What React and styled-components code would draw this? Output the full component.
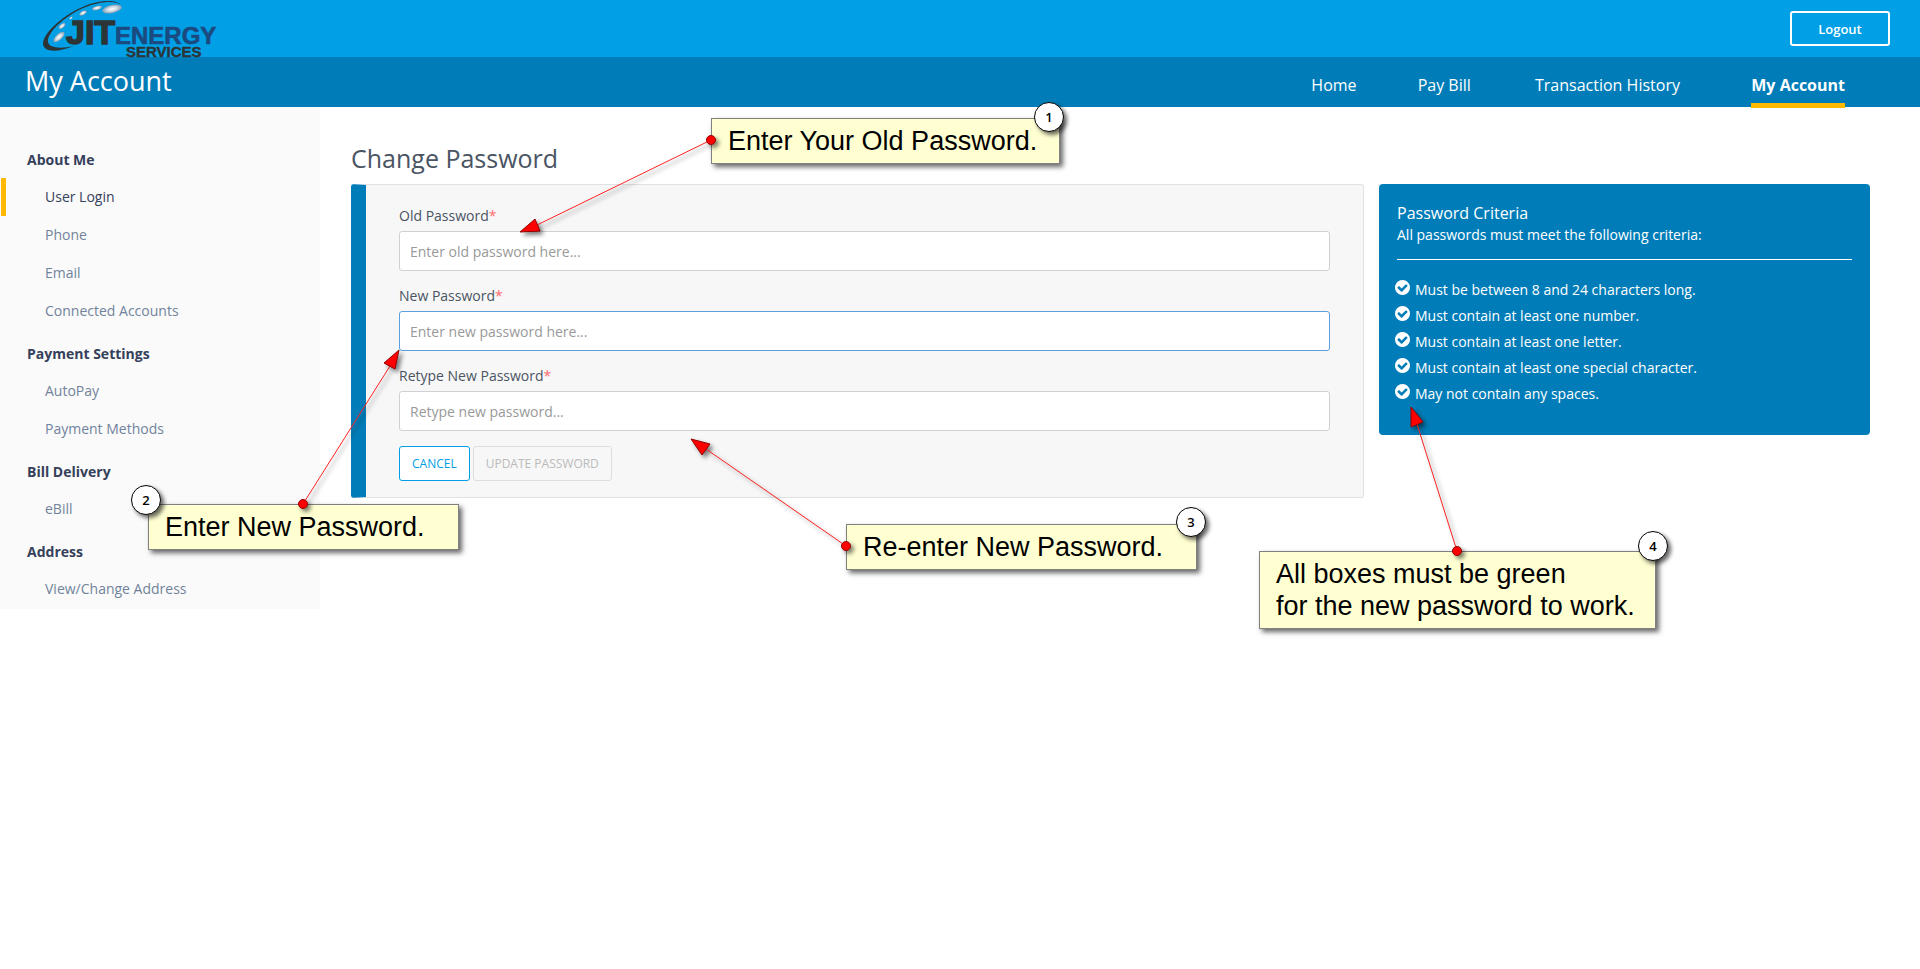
import React, { useState } from "react";
import styled, { createGlobalStyle, css } from "styled-components";

const navLinks = ["Home", "Pay Bill", "Transaction History", "My Account"];

const menu = [
  { title: "About Me", items: ["User Login", "Phone", "Email", "Connected Accounts"] },
  { title: "Payment Settings", items: ["AutoPay", "Payment Methods"] },
  { title: "Bill Delivery", items: ["eBill"] },
  { title: "Address", items: ["View/Change Address"] },
];

const fields = [
  { id: "oldPassword", label: "Old Password", placeholder: "Enter old password here..." },
  { id: "newPassword", label: "New Password", placeholder: "Enter new password here...", active: true },
  { id: "retypePassword", label: "Retype New Password", placeholder: "Retype new password..." },
];

const criteria = [
  "Must be between 8 and 24 characters long.",
  "Must contain at least one number.",
  "Must contain at least one letter.",
  "Must contain at least one special character.",
  "May not contain any spaces.",
];

// badge: centre of the numbered circle
const notes = [
  { n: 1, x: 711, y: 118, w: 349, badge: [1049, 117], lines: ["Enter Your Old Password."] },
  { n: 2, x: 148, y: 504, w: 311, badge: [146, 500], lines: ["Enter New Password."] },
  { n: 3, x: 846, y: 524, w: 351, badge: [1191, 522], lines: ["Re-enter New Password."] },
  {
    n: 4,
    x: 1259,
    y: 551,
    w: 397,
    badge: [1653, 546],
    lines: ["All boxes must be green", "for the new password to work."],
  },
];

const arrows = [
  { from: [711, 140], to: [537, 225], head: "520,232 535,219 540,231" },
  { from: [303, 504], to: [390, 366], head: "399,350 384,363 395,369" },
  { from: [846, 546], to: [706, 449], head: "691,439 710,444 702,455" },
  { from: [1457, 551], to: [1417, 424], head: "1411,407 1423,422 1411,427" },
];

const Logo = () => (
  <LogoSvg viewBox="0 0 180 57" role="img" aria-label="JIT Energy Services">
    <defs>
      <radialGradient id="dot">
        <stop offset="0" stopColor="#fff" />
        <stop offset="0.5" stopColor="#d3dde5" />
        <stop offset="1" stopColor="#7f9db3" />
      </radialGradient>
    </defs>
    <path
      d="M78 5C74 -1 54 -1 35 9C14 20 0 35 0 44C1 52 13 53 31 46C17 49 6 48 5 42C4 34 17 20 36 10C54 1 73 0 78 5Z"
      fill="#2d3436"
    />
    <g fill="url(#dot)">
      <ellipse cx="69" cy="9" rx="10" ry="4" transform="rotate(-12 69 9)" />
      <ellipse cx="54" cy="8" rx="5" ry="2" transform="rotate(-14 54 8)" />
      <ellipse cx="40" cy="13" rx="4" ry="2" transform="rotate(-28 40 13)" />
      <ellipse cx="28" cy="18" rx="2" ry="1" transform="rotate(-35 28 18)" />
      <ellipse cx="19" cy="26" rx="4" ry="2" transform="rotate(-40 19 26)" />
      <ellipse cx="16" cy="37" rx="7" ry="3" transform="rotate(-42 16 37)" />
    </g>
    <LogoText x="23" y="44" $size={34} $color="#2d3436" strokeWidth="1.5">JIT</LogoText>
    <LogoText x="72" y="44" $size={24} $color="#1b4a80" strokeWidth="0.6">ENERGY</LogoText>
    <LogoText x="83" y="57" $size={15} $color="#2d3436" strokeWidth="0.4">SERVICES</LogoText>
  </LogoSvg>
);

const CheckIcon = () => (
  <CheckSvg viewBox="128 128 1536 1536" aria-hidden="true">
    <path d="M1412 734q0-28-18-46l-91-90q-19-19-45-19t-45 19l-408 407-226-226q-19-19-45-19t-45 19l-91 90q-18 18-18 46 0 27 18 45l362 362q19 19 45 19 27 0 46-19l543-543q18-18 18-45zm252 162q0 209-103 385.5t-279.5 279.5-385.5 103-385.5-103-279.5-279.5-103-385.5 103-385.5 279.5-279.5 385.5-103 385.5 103 279.5 279.5 103 385.5z" />
  </CheckSvg>
);

export default function App() {
  const [values, setValues] = useState({});

  const handleChange = (e) => {
    setValues({ ...values, [e.target.id]: e.target.value });
  };

  const complete = fields.every((f) => values[f.id]);

  return (
    <Page>
      <GlobalStyle />
      <TopBar>
        <Logo />
        <LogoutButton type="button">Logout</LogoutButton>
      </TopBar>
      <NavBar>
        <NavTitle>My Account</NavTitle>
        <Nav>
          {navLinks.map((label) => (
            <NavLink key={label} href="#" data-label={label} $active={label === "My Account"}>
              {label}
            </NavLink>
          ))}
        </Nav>
      </NavBar>

      <Body>
        <Sidebar>
          {menu.map((group) => (
            <section key={group.title}>
              <MenuTitle>{group.title}</MenuTitle>
              {group.items.map((item) => (
                <MenuLink key={item} href="#" $active={item === "User Login"}>
                  {item}
                </MenuLink>
              ))}
            </section>
          ))}
        </Sidebar>

        <Main>
          <Title>Change Password</Title>
          <Columns>
            <Form onSubmit={(e) => e.preventDefault()}>
              {fields.map((f) => (
                <Field key={f.id}>
                  <Label htmlFor={f.id}>
                    {f.label}
                    <Required>*</Required>
                  </Label>
                  <Input
                    id={f.id}
                    type="password"
                    placeholder={f.placeholder}
                    value={values[f.id] || ""}
                    onChange={handleChange}
                    $active={f.active}
                  />
                </Field>
              ))}
              <Actions>
                <Button type="button" onClick={() => setValues({})}>CANCEL</Button>
                <Button type="submit" disabled={!complete}>UPDATE PASSWORD</Button>
              </Actions>
            </Form>

            <Criteria>
              <CriteriaTitle>Password Criteria</CriteriaTitle>
              <CriteriaText>All passwords must meet the following criteria:</CriteriaText>
              <CriteriaList>
                {criteria.map((text) => (
                  <CriteriaItem key={text}>
                    <CheckIcon />
                    {text}
                  </CriteriaItem>
                ))}
              </CriteriaList>
            </Criteria>
          </Columns>
        </Main>
      </Body>

      <Overlay>
        {notes.map((note) => (
          <React.Fragment key={note.n}>
            <Note $x={note.x} $y={note.y} $w={note.w}>
              {note.lines.map((line) => (
                <div key={line}>{line}</div>
              ))}
            </Note>
            <Badge $x={note.badge[0]} $y={note.badge[1]}>{note.n}</Badge>
          </React.Fragment>
        ))}
        <Arrows aria-hidden="true">
          {arrows.map((a) => (
            <g key={a.head}>
              <line x1={a.from[0]} y1={a.from[1]} x2={a.to[0]} y2={a.to[1]} />
              <polygon points={a.head} />
              <circle cx={a.from[0]} cy={a.from[1]} r="4.5" />
            </g>
          ))}
        </Arrows>
      </Overlay>
    </Page>
  );
}

const GlobalStyle = createGlobalStyle`
  *, *::before, *::after {
    box-sizing: border-box;
  }
  body {
    margin: 0;
    background: #fff;
    color: #4a5463;
    font-family: "Open Sans", "Noto Sans", sans-serif;
    font-size: 14px;
    line-height: 20px;
  }
  button, input {
    font-family: inherit;
  }
`;

const Page = styled.div`
  position: relative;
  min-height: 100vh;
`;

const TopBar = styled.header`
  display: flex;
  align-items: center;
  justify-content: space-between;
  height: 57px;
  padding: 0 30px 0 43px;
  background: #009fe6;
`;

const LogoSvg = styled.svg`
  width: 180px;
  height: 57px;
  overflow: visible;
`;

const LogoText = styled.text`
  fill: ${(p) => p.$color};
  stroke: ${(p) => p.$color};
  font-family: "Liberation Sans", Arial, sans-serif;
  font-size: ${(p) => p.$size}px;
  font-weight: 700;
`;

const LogoutButton = styled.button`
  width: 100px;
  height: 35px;
  border: 2px solid #fff;
  border-radius: 3px;
  background: transparent;
  color: #fff;
  font-size: 13px;
  font-weight: 600;
  cursor: pointer;
`;

const NavBar = styled.div`
  display: flex;
  justify-content: space-between;
  height: 50px;
  padding: 0 75px 0 25px;
  background: #007db8;
  color: #fff;
`;

const NavTitle = styled.h1`
  margin: 0;
  font-size: 27px;
  font-weight: 400;
  line-height: 48px;
`;

const Nav = styled.nav`
  display: flex;
  gap: 59px;
`;

const NavLink = styled.a`
  height: 51px;
  color: #fff;
  font-size: 16px;
  line-height: 56px;
  text-decoration: none;
  ${(p) =>
    p.$active &&
    css`
      border-bottom: 5px solid #ffb900;
      font-weight: 700;
    `}

  /* keeps the width of the bold state */
  &::after {
    content: attr(data-label);
    display: block;
    height: 0;
    overflow: hidden;
    visibility: hidden;
    font-weight: 700;
  }
`;

const Body = styled.div`
  display: flex;
  align-items: flex-start;
`;

const Sidebar = styled.aside`
  flex: 0 0 320px;
  padding: 29px 0 1px;
  background: #fafafa;
`;

const MenuTitle = styled.h2`
  margin: 0;
  padding: 14px 27px 8px;
  color: #35405a;
  font-size: 14px;
  font-weight: 700;
  line-height: 20px;
`;

const MenuLink = styled.a`
  display: block;
  margin-left: 1px;
  padding-left: 39px;
  border-left: 5px solid ${(p) => (p.$active ? "#ffb900" : "transparent")};
  color: ${(p) => (p.$active ? "#35405a" : "#71839b")};
  font-weight: ${(p) => (p.$active ? 500 : 400)};
  line-height: 38px;
  text-decoration: none;
`;

const Main = styled.main`
  flex: 1;
  padding: 34px 50px 0 31px;
`;

const Title = styled.h2`
  margin: 0 0 9px;
  color: #4a5463;
  font-size: 25px;
  font-weight: 400;
  line-height: 34px;
`;

const Columns = styled.div`
  display: grid;
  grid-template-columns: 1013fr 491fr;
  align-items: start;
  gap: 15px;
`;

const Form = styled.form`
  padding: 21px 33px 16px;
  border: 1px solid #dfe2e5;
  border-left: 15px solid #007db8;
  border-radius: 3px;
  background: #f7f7f7;
`;

const Field = styled.div`
  margin-bottom: 15px;
`;

const Label = styled.label`
  display: block;
  margin-bottom: 5px;
`;

const Required = styled.span`
  color: #ff6b6b;
`;

const Input = styled.input`
  display: block;
  width: 100%;
  height: 40px;
  padding: 0 10px;
  border: 1px solid ${(p) => (p.$active ? "#5b9fdc" : "#ced0d3")};
  border-radius: 3px;
  background: #fff;
  color: #4a5463;
  font-size: 14px;

  &::placeholder {
    color: #999;
  }
`;

const Actions = styled.div`
  display: flex;
  gap: 3px;
`;

const Button = styled.button`
  height: 35px;
  padding: 0 12px;
  border: 1px solid #009fe6;
  border-radius: 3px;
  background: #fff;
  color: #009fe6;
  font-size: 12px;
  cursor: pointer;

  &:disabled {
    border-color: #dedede;
    background: #f7f7f7;
    color: #bbb;
    cursor: default;
  }
`;

const Criteria = styled.section`
  padding: 18px 18px 28px;
  border-radius: 4px;
  background: #007db8;
  color: #fff;
`;

const CriteriaTitle = styled.h3`
  margin: 0;
  font-size: 16px;
  font-weight: 400;
  line-height: 23px;
`;

const CriteriaText = styled.p`
  margin: 0;
  padding-bottom: 14px;
  border-bottom: 1px solid #fff;
`;

const CriteriaList = styled.ul`
  margin: 17px 0 0;
  padding: 0;
  list-style: none;
`;

const CriteriaItem = styled.li`
  display: flex;
  align-items: flex-start;
  gap: 5px;
  margin-left: -2px;
  line-height: 26px;
`;

const CheckSvg = styled.svg`
  width: 15px;
  height: 15px;
  margin-top: 3px;
  fill: #fff;
`;

const Overlay = styled.div`
  position: absolute;
  inset: 0;
  overflow: hidden;
  pointer-events: none;
`;

const Note = styled.div`
  position: absolute;
  left: ${(p) => p.$x}px;
  top: ${(p) => p.$y}px;
  width: ${(p) => p.$w}px;
  padding: 6px 16px;
  border: 1px solid #808080;
  background: #ffffd2;
  box-shadow: 3px 3px 5px rgba(0, 0, 0, 0.6);
  color: #000;
  font-family: "Liberation Sans", Arial, sans-serif;
  font-size: 27px;
  line-height: 32px;
  white-space: nowrap;
`;

const Badge = styled.span`
  position: absolute;
  left: ${(p) => p.$x - 15}px;
  top: ${(p) => p.$y - 15}px;
  width: 30px;
  height: 30px;
  border: 1px solid #000;
  border-radius: 50%;
  background: #fff;
  box-shadow: 3px 3px 4px rgba(0, 0, 0, 0.6);
  color: #000;
  font-size: 13px;
  font-weight: 600;
  line-height: 28px;
  text-align: center;
`;

const Arrows = styled.svg`
  position: absolute;
  width: 100%;
  height: 100%;
  fill: #f00;
  stroke: #900000;
  stroke-width: 1;
  filter: drop-shadow(3px 3px 2px rgba(0, 0, 0, 0.5));

  line {
    stroke: #f22;
  }
`;
